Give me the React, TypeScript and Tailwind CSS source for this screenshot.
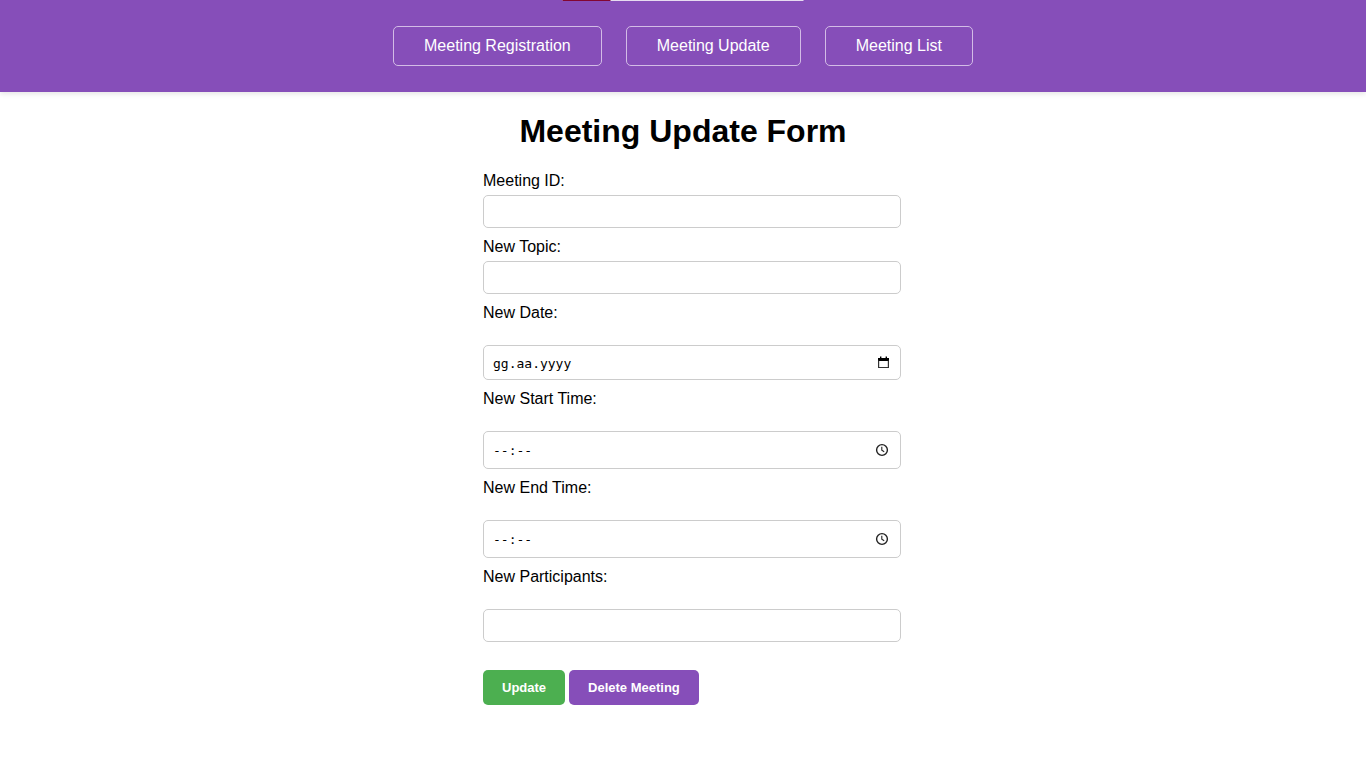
import type { ReactNode } from "react";

const navItems = ["Meeting Registration", "Meeting Update", "Meeting List"];

function CalendarIcon() {
  return (
    <svg width="11" height="13" viewBox="0 0 11 13" fill="none" aria-hidden="true">
      <path d="M0 2h11v3H0zM2 0.5h1.400V2H2zM7.600 0.500H9V2H7.600z" fill="#000" />
      <path d="M0.600 4.500v7h9.800v-7" stroke="#333" strokeWidth="1.200" />
    </svg>
  );
}

function ClockIcon() {
  return (
    <svg width="14" height="14" viewBox="0 0 14 14" fill="none" stroke="#222" aria-hidden="true">
      <circle cx="7" cy="7" r="5.400" strokeWidth="1.400" />
      <path d="M6.800 3.800v3.400l2.400 1.600" strokeWidth="1.100" />
    </svg>
  );
}

function TextField({ id, label, labelGap }: { id: string; label: string; labelGap: string }) {
  return (
    <div className={`flex flex-col ${labelGap}`}>
      <label htmlFor={id} className="leading-[18px]">{label}</label>
      <input id={id} type="text" className="-mr-[18px] h-[33px] rounded-[5px] border border-[#ccc] px-2 text-[13px]" />
    </div>
  );
}

function PickerField({ id, label, hint, height, icon }: { id: string; label: string; hint: string; height: string; icon: ReactNode }) {
  return (
    <div className="flex flex-col gap-[23px]">
      <label htmlFor={id} className="leading-[18px]">{label}</label>
      <div className={`-mr-[18px] flex items-center rounded-[5px] border border-[#ccc] pr-[11px] pl-[9px] ${height}`}>
        <input
          id={id}
          type="text"
          placeholder={hint}
          className="min-w-0 flex-1 bg-transparent pt-[2px] font-['DejaVu_Sans_Mono',monospace] text-[13px] text-black outline-none placeholder:text-black"
        />
        <button type="button" aria-label={`Choose ${label}`}>{icon}</button>
      </div>
    </div>
  );
}

export default function App() {
  return (
    <div className="min-h-screen bg-white font-['Liberation_Sans',Arial,sans-serif] text-base text-black">
      <header className="relative bg-[#864eb9] py-[26px] shadow-[0_2px_5px_rgba(0,0,0,0.1)]">
        <div className="absolute top-0 left-1/2 flex h-px w-[241px] -translate-x-1/2 bg-[#e6dbf0]">
          <div className="w-1/5 bg-[#820632]" />
        </div>
        <nav className="flex justify-center gap-6">
          {navItems.map((item) => (
            <a key={item} href="#" className="flex h-10 items-center rounded-[5px] border border-[#d3bce6] px-[30px] leading-[18px] text-white">
              {item}
            </a>
          ))}
        </nav>
      </header>
      <main className="mx-auto max-w-[400px] pt-[21px] pb-10">
        <h1 className="text-center text-[32px] leading-9 font-bold">Meeting Update Form</h1>
        <form className="mt-[23px]" onSubmit={(e) => e.preventDefault()}>
          <div className="flex flex-col gap-[10px]">
            <TextField id="meeting-id" label="Meeting ID:" labelGap="gap-[5px]" />
            <TextField id="topic" label="New Topic:" labelGap="gap-[5px]" />
            <PickerField id="date" label="New Date:" hint="gg.aa.yyyy" height="h-[35px]" icon={<CalendarIcon />} />
            <PickerField id="start" label="New Start Time:" hint="--:--" height="h-[38px]" icon={<ClockIcon />} />
            <PickerField id="end" label="New End Time:" hint="--:--" height="h-[38px]" icon={<ClockIcon />} />
            <TextField id="participants" label="New Participants:" labelGap="gap-[23px]" />
          </div>
          <div className="mt-7 flex gap-1 text-[13px] leading-[15px] font-bold text-white">
            <button type="submit" className="rounded-[5px] bg-[#4caf50] px-[19px] py-[10px]">Update</button>
            <button type="button" className="rounded-[5px] bg-[#864eb9] px-[19px] py-[10px]">Delete Meeting</button>
          </div>
        </form>
      </main>
    </div>
  );
}
